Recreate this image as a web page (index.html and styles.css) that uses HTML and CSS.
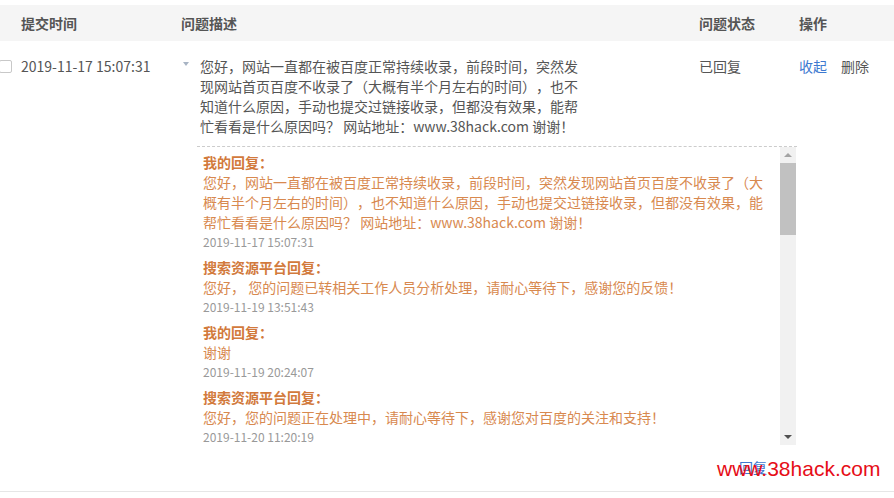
FILE: index.html
```html
<!DOCTYPE html>
<html lang="zh-CN">
<head>
  <meta charset="UTF-8" />
  <title>问题反馈</title>
  <link rel="stylesheet" href="styles.css">
</head>
<body>
  <div class="feedback">
    <div class="grid head">
      <div></div>
      <div>提交时间</div>
      <div>问题描述</div>
      <div>问题状态</div>
      <div>操作</div>
    </div>

    <div class="grid item">
      <div class="check"><span class="box"></span></div>
      <div class="date">2019-11-17 15:07:31</div>
      <div class="desc">
        <span class="arrow"></span>
        <p>您好，网站一直都在被百度正常持续收录，前段时间，突然发现网站首页百度不收录了（大概有半个月左右的时间），也不知道什么原因，手动也提交过链接收录，但都没有效果，能帮忙看看是什么原因吗？ 网站地址：www.38hack.com 谢谢！</p>
      </div>
      <div class="status">已回复</div>
      <div class="ops"><a class="link">收起</a><a class="plain">删除</a></div>

      <div class="replies">
        <div class="reply-box">
          <div class="reply-list">
            <div class="reply">
              <h4>我的回复：</h4>
              <p>您好，网站一直都在被百度正常持续收录，前段时间，突然发现网站首页百度不收录了（大概有半个月左右的时间），也不知道什么原因，手动也提交过链接收录，但都没有效果，能帮忙看看是什么原因吗？ 网站地址：www.38hack.com 谢谢！</p>
              <span class="time">2019-11-17 15:07:31</span>
            </div>
            <div class="reply">
              <h4>搜索资源平台回复：</h4>
              <p>您好， 您的问题已转相关工作人员分析处理，请耐心等待下，感谢您的反馈！</p>
              <span class="time">2019-11-19 13:51:43</span>
            </div>
            <div class="reply">
              <h4>我的回复：</h4>
              <p>谢谢</p>
              <span class="time">2019-11-19 20:24:07</span>
            </div>
            <div class="reply">
              <h4>搜索资源平台回复：</h4>
              <p>您好，您的问题正在处理中，请耐心等待下，感谢您对百度的关注和支持！</p>
              <span class="time">2019-11-20 11:20:19</span>
            </div>
          </div>
          <div class="scrollbar">
            <span class="btn up"></span>
            <div class="track"><span class="thumb"></span></div>
            <span class="btn down"></span>
          </div>
        </div>
        <div class="reply-foot">
          <a class="link">回复</a>
          <span class="watermark">www.38hack.com</span>
        </div>
      </div>
    </div>
  </div>
</body>
</html>
```

FILE: styles.css
```css
* {
  margin: 0;
  padding: 0;
  box-sizing: border-box;
}

body {
  font-family: "Noto Sans CJK SC", "Microsoft YaHei", sans-serif;
  font-size: 14px;
  line-height: 20px;
  color: #555;
  background: #fff;
  overflow: hidden;
  text-spacing-trim: space-all;
}

.feedback {
  padding-top: 5px;
}

.grid {
  display: grid;
  grid-template-columns: 21px 160px 518px 100px 1fr;
}

.head {
  height: 36px;
  align-items: center;
  background: #f5f5f5;
  font-weight: 700;
  color: #555;
}

.item {
  padding-top: 15px;
  border-bottom: 1px solid #e6e6e6;
}

.check .box {
  display: block;
  width: 13px;
  height: 13px;
  margin: 4px 0 0 -1px;
  border: 1px solid #c8c8c8;
  border-radius: 2px;
  background: #fff;
}

.desc {
  display: flex;
}

.arrow {
  width: 0;
  height: 0;
  margin: 6px 11px 0 2px;
  border-left: 3px solid transparent;
  border-right: 3px solid transparent;
  border-top: 4px solid #a8b4c4;
}

.desc p {
  width: 385px;
}

.ops {
  display: flex;
  gap: 14px;
}

.link {
  color: #3d79d0;
  cursor: pointer;
}

.plain {
  color: #555;
  cursor: pointer;
}

.replies {
  grid-column: 3 / 5;
  margin: 10px 0 0 16px;
}

.reply-box {
  display: flex;
  height: 299px;
  width: 600px;
  border-top: 1px dashed #ccc;
}

.reply-list {
  flex: 1;
  overflow: hidden;
  padding: 5px 14px 0 6px;
}

.reply {
  margin-bottom: 5px;
}

.reply h4 {
  font-size: 14px;
  font-weight: 700;
  color: #d27a3c;
}

.reply p {
  color: #d8894f;
}

.reply .time {
  display: block;
  font-size: 12px;
  color: #999;
}

.scrollbar {
  width: 16px;
  margin-right: 1px;
  display: flex;
  flex-direction: column;
  background: #f1f1f1;
}

.btn {
  height: 16px;
  display: flex;
  align-items: center;
  justify-content: center;
}

.btn::before {
  content: '';
  border-left: 4px solid transparent;
  border-right: 4px solid transparent;
}

.up::before {
  border-bottom: 4px solid #a3a3a3;
}

.down::before {
  border-top: 4px solid #505050;
}

.track {
  flex: 1;
}

.thumb {
  display: block;
  height: 72px;
  background: #c1c1c1;
}

.reply-foot {
  position: relative;
  display: flex;
  justify-content: flex-end;
  width: 600px;
  padding: 12px 30px 14px 0;
}

.watermark {
  position: absolute;
  left: 520px;
  top: 10px;
  font-family: "Liberation Sans", Arial, sans-serif;
  font-size: 21px;
  line-height: 28px;
  color: #e60d17;
}
```
